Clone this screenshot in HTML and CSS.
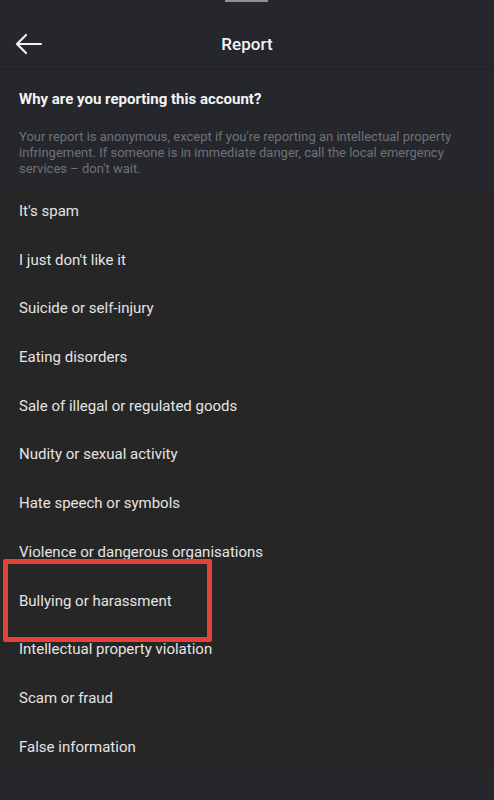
FILE: index.html
```html
<!DOCTYPE html>
<html lang="en">
<head>
<meta charset="utf-8">
<link rel="stylesheet" href="styles.css">
</head>
<body>
<div class="screen">
  <header class="top">
    <div class="notch"></div>
    <div class="nav">
      <svg class="back" width="28" height="22" viewBox="0 0 28 22" fill="none" stroke="#f2f2f2" stroke-width="2.2" stroke-linecap="round" stroke-linejoin="round">
        <path d="M26 11H2M11 2L2 11L11 20"/>
      </svg>
      <div class="title">Report</div>
    </div>
    <div class="intro">
      <h1 class="question">Why are you reporting this account?</h1>
      <p class="note">Your report is anonymous, except if you're reporting an intellectual property infringement. If someone is in immediate danger, call the local emergency services – don't wait.</p>
    </div>
  </header>
  <ul class="reasons">
    <li class="reason">It's spam</li>
    <li class="reason">I just don't like it</li>
    <li class="reason">Suicide or self-injury</li>
    <li class="reason">Eating disorders</li>
    <li class="reason">Sale of illegal or regulated goods</li>
    <li class="reason">Nudity or sexual activity</li>
    <li class="reason">Hate speech or symbols</li>
    <li class="reason">Violence or dangerous organisations</li>
    <li class="reason highlight">Bullying or harassment</li>
    <li class="reason">Intellectual property violation</li>
    <li class="reason">Scam or fraud</li>
    <li class="reason">False information</li>
  </ul>
  <div class="bottom"></div>
</div>
</body>
</html>
```

FILE: styles.css
```css
*, *::before, *::after { box-sizing: border-box; }
html, body {
  margin: 0;
  padding: 0;
  background: #25272c;
}
body {
  font-family: Roboto, "Noto Sans", sans-serif;
  color: #e6e6e6;
  width: 494px;
  height: 800px;
  overflow: hidden;
}
.screen {
  display: flex;
  flex-direction: column;
}
.top {
  background: #25272c;
  position: relative;
}
.notch {
  position: absolute;
  left: 225px;
  top: 0;
  width: 43px;
  height: 2px;
  background: #8d9096;
}
.nav {
  height: 70px;
  display: flex;
  align-items: center;
  padding-top: 18px;
  position: relative;
  border-bottom: 1px solid #1f2125;
}
.back {
  position: absolute;
  left: 15px;
  top: 33px;
}
.title {
  flex: 1;
  text-align: center;
  font-size: 17px;
  font-weight: 500;
  color: #f2f2f2;
  letter-spacing: 0.1px;
}
.intro {
  padding: 19px 19px 12px;
}
.question {
  margin: 0;
  font-size: 15px;
  font-weight: 700;
  color: #f4f4f4;
  line-height: 20px;
}
.note {
  margin: 20px 0 0;
  font-size: 13px;
  line-height: 16px;
  color: #6f7277;
}
.reasons {
  list-style: none;
  margin: 0;
  padding: 0;
  background: #262626;
}
.reason {
  height: 48.7px;
  padding: 12px 19px 0;
  font-size: 15px;
  line-height: 20px;
  color: #e4e4e4;
  position: relative;
}
.highlight::after {
  content: "";
  position: absolute;
  left: 3px;
  top: -20px;
  width: 209px;
  height: 83px;
  border: 5px solid #e5413a;
  border-radius: 2px;
}
.bottom {
  height: 30px;
  background: #25272c;
}
```
